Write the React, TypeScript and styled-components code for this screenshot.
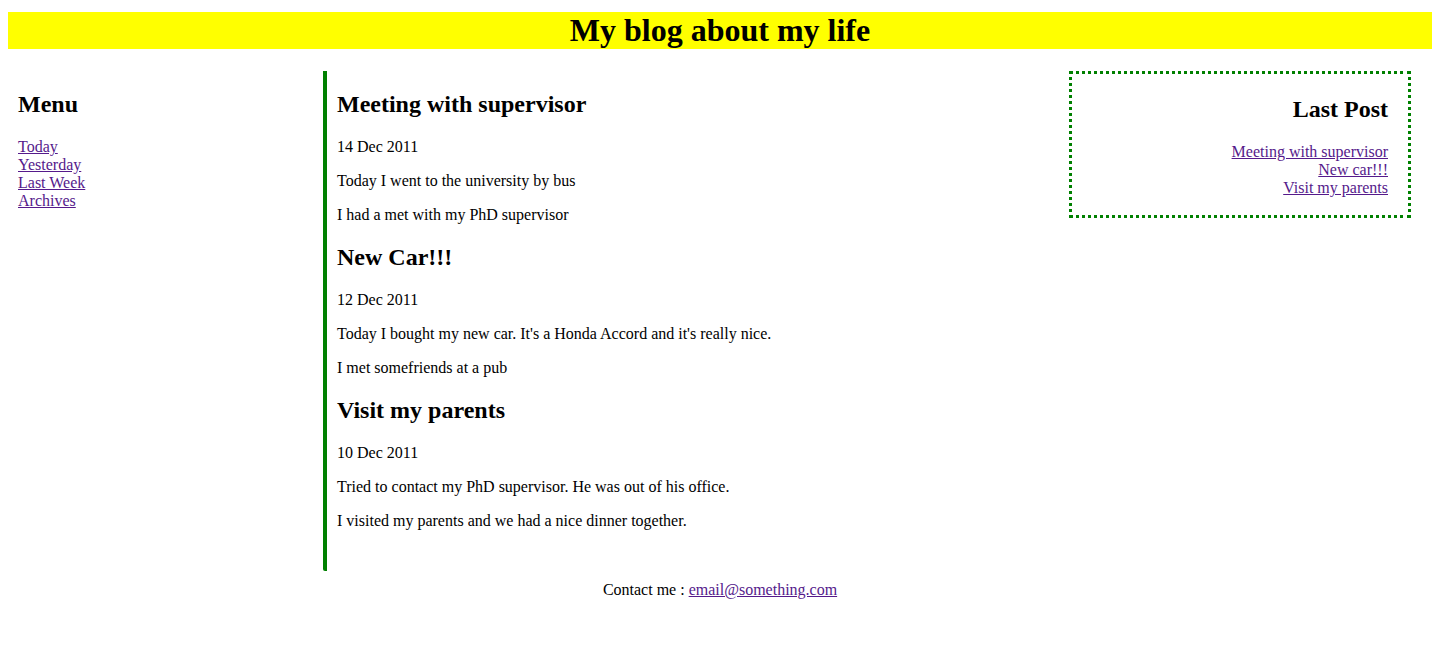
import { ReactElement } from 'react'
import styled, { createGlobalStyle } from 'styled-components'

const GlobalStyle = createGlobalStyle`
  body {
    margin: 0;
    font-family: "Liberation Serif", "Times New Roman", serif;
    font-size: 16px;
    color: #000;
    background: #fff;
  }
`

const Page = styled.div`
  width: 1424px;
  padding-left: 8px;
`

const Header = styled.header`
  margin-top: 12px;
  background: #ffff00;
`

const Title = styled.h1`
  margin: 0;
  font-size: 32px;
  line-height: 37px;
  text-align: center;
`

const Columns = styled.div`
  display: flex;
  align-items: flex-start;
  margin-top: 22px;
`

const Sidebar = styled.nav`
  width: 315px;
  padding: 0 10px;
  box-sizing: border-box;
`

const Main = styled.main`
  width: 746px;
  height: 500px;
  box-sizing: border-box;
  border-left: 4px solid #008000;
  border-radius: 0 0 0 2px;
  padding-left: 10px;
`

const Aside = styled.aside`
  width: 342px;
  box-sizing: border-box;
  border: 3px dotted #008000;
  padding: 2px 20px;
  text-align: right;
`

const Heading = styled.h2`
  font-size: 24px;
  margin: 20px 0;
`

const Text = styled.p`
  margin: 16px 0;
`

const LinkList = styled.div<{ $spaced?: boolean }>`
  margin: ${p => (p.$spaced ? '16px 0' : '0')};
`

const Link = styled.a`
  display: block;
  color: #551a8b;
  text-decoration: underline;
`

const Footer = styled.footer`
  margin-top: 10px;
  text-align: center;
`

const FooterLink = styled.a`
  color: #551a8b;
  text-decoration: underline;
`

const posts = [
  {
    title: 'Meeting with supervisor',
    date: '14 Dec 2011',
    lines: ['Today I went to the university by bus', 'I had a met with my PhD supervisor'],
  },
  {
    title: 'New Car!!!',
    date: '12 Dec 2011',
    lines: ["Today I bought my new car. It's a Honda Accord and it's really nice.", 'I met somefriends at a pub'],
  },
  {
    title: 'Visit my parents',
    date: '10 Dec 2011',
    lines: ['Tried to contact my PhD supervisor. He was out of his office.', 'I visited my parents and we had a nice dinner together.'],
  },
]

export default function App(): ReactElement {
  return (
    <>
      <GlobalStyle />
      <Page>
        <Header>
          <Title>My blog about my life</Title>
        </Header>

        <Columns>
          <Sidebar>
            <Heading>Menu</Heading>
            <LinkList>
              <Link href="#">Today</Link>
              <Link href="#">Yesterday</Link>
              <Link href="#">Last Week</Link>
              <Link href="#">Archives</Link>
            </LinkList>
          </Sidebar>

          <Main>
            {posts.map(post => (
              <section key={post.title}>
                <Heading>{post.title}</Heading>
                <Text>{post.date}</Text>
                {post.lines.map(line => (
                  <Text key={line}>{line}</Text>
                ))}
              </section>
            ))}
          </Main>

          <Aside>
            <Heading>Last Post</Heading>
            <LinkList $spaced>
              <Link href="#">Meeting with supervisor</Link>
              <Link href="#">New car!!!</Link>
              <Link href="#">Visit my parents</Link>
            </LinkList>
          </Aside>
        </Columns>

        <Footer>
          Contact me : <FooterLink href="#">email@something.com</FooterLink>
        </Footer>
      </Page>
    </>
  )
}
